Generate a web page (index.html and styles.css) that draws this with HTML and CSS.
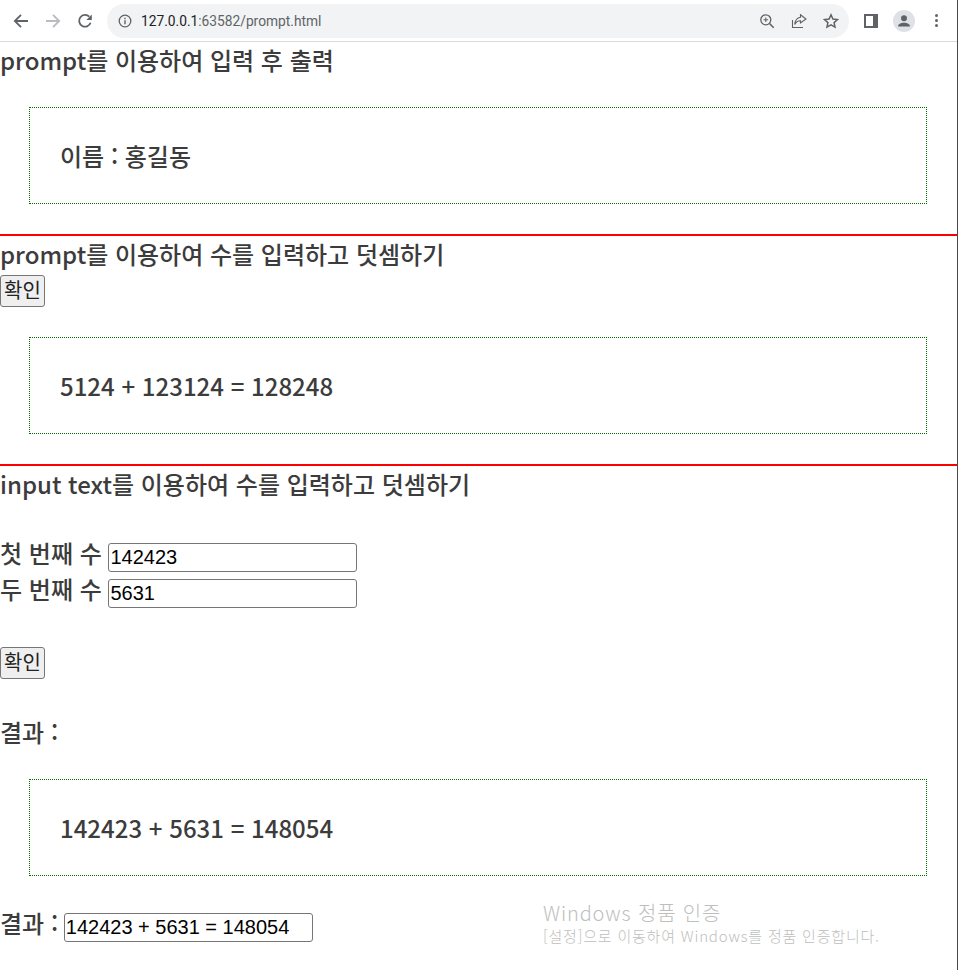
FILE: index.html
```html
<!DOCTYPE html>
<html lang="ko">
<head>
<meta charset="utf-8">
<title>prompt</title>
<link rel="stylesheet" href="styles.css">
</head>
<body>
<div class="window">
  <header class="toolbar">
    <svg class="nav" viewBox="0 0 16 16" width="16" height="16"><path d="M15 8H1.800M8 1.800 1.800 8 8 14.200" fill="none" stroke="#5f6368" stroke-width="1.8"/></svg>
    <svg class="nav" viewBox="0 0 16 16" width="16" height="16"><path d="M1 8h13.200M8 1.800 14.200 8 8 14.200" fill="none" stroke="#b9bbbe" stroke-width="1.8"/></svg>
    <svg class="nav" viewBox="0 0 16 16" width="16" height="16"><path d="M13.600 9.800A5.900 5.900 0 1 1 12.300 3.700" fill="none" stroke="#5f6368" stroke-width="1.800"/><path d="M9.400 7h5.400V1.600z" fill="#5f6368"/></svg>
    <div class="omnibox">
      <svg viewBox="0 0 14 14" width="14" height="14"><circle cx="7" cy="7" r="5.800" fill="none" stroke="#5f6368" stroke-width="1.300"/><path d="M7 6.200v4M7 3.700v1.500" stroke="#5f6368" stroke-width="1.400"/></svg>
      <span class="url"><span class="host">127.0.0.1</span>:63582/prompt.html</span>
      <span class="omni-icons">
        <svg viewBox="0 0 16 16" width="16" height="16"><circle cx="6.800" cy="6.800" r="5" fill="none" stroke="#5f6368" stroke-width="1.300"/><path d="m10.500 10.500 4.200 4.200" stroke="#5f6368" stroke-width="1.600"/><path d="M4.500 6.800h4.600M6.800 4.500v4.600" stroke="#5f6368" stroke-width="1.100"/></svg>
        <svg viewBox="0 0 16 16" width="16" height="16"><path d="M1.500 7v7.500h10.500" fill="none" stroke="#5f6368" stroke-width="1.100"/><path d="M9.500 1.800 15 6l-5.500 4V7.800C7 7.800 5 9 3.800 11.500 4 7.800 6 4.800 9.500 4.200z" fill="none" stroke="#5f6368" stroke-width="1.100"/></svg>
        <svg viewBox="0 0 16 16" width="16" height="16"><path d="m8 1.800 1.900 4.200 4.600.5-3.400 3.100.9 4.500L8 11.800l-4 2.300.9-4.500L1.500 6.500l4.600-.5z" fill="none" stroke="#5f6368" stroke-width="1.500"/></svg>
      </span>
    </div>
    <span class="panel-icon"></span>
    <span class="avatar"><svg viewBox="0 0 22 22" width="22" height="22"><circle cx="11" cy="8.300" r="3" fill="#5f6368"/><path d="M5 16.500c0-2.600 3-3.800 6-3.800s6 1.200 6 3.800z" fill="#5f6368"/></svg></span>
    <span class="menu-dots"><i></i><i></i><i></i></span>
  </header>

  <main class="page">
    <section class="block">
      <div class="line">prompt를 이용하여 입력 후 출력</div>
      <div class="result">이름 : 홍길동</div>
    </section>
    <section class="block ruled">
      <div class="line">prompt를 이용하여 수를 입력하고 덧셈하기</div>
      <button class="btn" type="button">확인</button>
      <div class="result">5124 + 123124 = 128248</div>
    </section>
    <section class="block ruled">
      <div class="line">input text를 이용하여 수를 입력하고 덧셈하기</div>
      <div class="fields">
        <div class="field">첫 번째 수 <input class="input" type="text" value="142423"></div>
        <div class="field">두 번째 수 <input class="input" type="text" value="5631"></div>
      </div>
      <button class="btn btn-spaced" type="button">확인</button>
      <div class="line outcome">결과 :</div>
      <div class="result">142423 + 5631 = 148054</div>
      <div class="field final">결과 : <input class="input input-wide" type="text" value="142423 + 5631 = 148054"></div>
    </section>
  </main>

  <div class="watermark">
    <div class="wm-title">Windows 정품 인증</div>
    <div class="wm-sub">[설정]으로 이동하여 Windows를 정품 인증합니다.</div>
  </div>
</div>
</body>
</html>
```
FILE: styles.css
```css
* { box-sizing: border-box; }
html, body { margin: 0; padding: 0; height: 100%; overflow: hidden; background: #fff; }
.window {
  position: relative;
  width: 958px;
  height: 970px;
  border-right: 1px solid #4a4a4a;
  overflow: hidden;
  font-family: "Noto Sans CJK KR", "Noto Sans", sans-serif;
  font-size: 24px;
  font-weight: 500;
  line-height: 35px;
  color: #3c3c3c;
}
.toolbar {
  display: flex;
  align-items: center;
  height: 42px;
  border-bottom: 1px solid #d9dadc;
  padding: 0 0 0 13px;
  background: #fff;
  font-weight: 400;
}
.nav { flex: none; margin-right: 16px; }
.omnibox {
  display: flex;
  align-items: center;
  width: 742px;
  height: 34px;
  margin-left: -2px;
  padding-left: 11px;
  border-radius: 17px;
  background: #f1f3f4;
}
.url {
  margin-left: 9px;
  font: 13.75px/34px "Roboto", "Liberation Sans", sans-serif;
  color: #5f6368;
}
.host { color: #202124; }
.omni-icons { display: flex; gap: 16px; margin-left: auto; margin-right: 10px; }
.panel-icon {
  flex: none;
  width: 14px;
  height: 14px;
  margin-left: 15px;
  border: 2px solid #5f6368;
  border-right-width: 5px;
  background: #fff;
}
.avatar {
  flex: none;
  width: 22px;
  height: 22px;
  margin-left: 15px;
  border-radius: 50%;
  background: #dee1e6;
}
.avatar svg { display: block; }
.menu-dots { display: flex; flex-direction: column; gap: 2px; margin-left: 20px; }
.menu-dots i { display: block; width: 3px; height: 3px; border-radius: 50%; background: #5f6368; }

.page { display: block; }
.block { padding-bottom: 30px; }
.ruled { border-top: 2px solid #f00; }
.line { height: 35px; white-space: nowrap; }
.result {
  width: 898px;
  margin: 30px 0 0 29px;
  padding: 30px;
  height: 97px;
  border: 1px dotted #060;
  white-space: nowrap;
}
.btn {
  display: block;
  width: 45px;
  height: 32px;
  margin: 4px 0 0;
  padding: 0;
  font: 400 20px/28px "Liberation Sans", "Noto Sans CJK KR", sans-serif;
  color: #222;
  background: #efefef;
  border: 1px solid #767676;
  border-radius: 3px;
}
.btn-spaced { margin-top: 40px; }
.fields { margin-top: 34px; }
.field { height: 36px; line-height: 35px; white-space: nowrap; }
.input {
  width: 249px;
  height: 29px;
  padding: 1px 1px;
  font: 400 20px "Liberation Sans", sans-serif;
  color: #000;
  background: #fff;
  border: 1px solid #767676;
  border-radius: 3px;
  vertical-align: -1px;
}
.input-wide { margin-left: -1px; }
.outcome { margin-top: 35px; }
.final { margin-top: 29px; }
.watermark {
  position: absolute;
  left: 543px;
  top: 900px;
  color: #bebebe;
  font-weight: 300;
  white-space: nowrap;
}
.wm-title { font-size: 20px; line-height: 26px; letter-spacing: 0.85px; }
.wm-sub { font-size: 15px; line-height: 20px; letter-spacing: 0.8px; }
```
